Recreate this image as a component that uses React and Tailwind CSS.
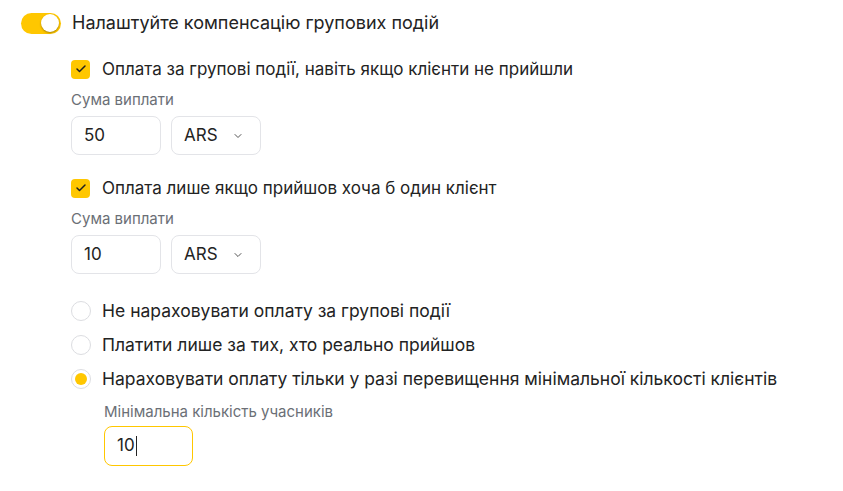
import { Check, ChevronDown } from 'lucide-react';

const font = { fontFamily: 'Inter, "Noto Sans", sans-serif' };

function Checkbox({ label }) {
  return (
    <div className="flex h-[24px] items-center gap-[12px]">
      <span className="flex h-[19px] w-[19px] items-center justify-center rounded-[4px] bg-[#ffc700]">
        <Check className="h-[12px] w-[12px] text-[#1f1f1f]" strokeWidth={3} />
      </span>
      <span className="text-[17px] leading-[24px] text-[#232323]">{label}</span>
    </div>
  );
}

function Amount({ value }) {
  return (
    <div className="mt-[9px]">
      <div className="text-[15px] leading-[20px] text-[#6b6f76]">Сума виплати</div>
      <div className="mt-[6px] flex gap-[10px]">
        <div className="flex h-[39px] w-[90px] items-center rounded-[8px] border border-[#e3e4e8] px-[12px] text-[17px] text-[#232323]">
          {value}
        </div>
        <div className="flex h-[39px] w-[90px] items-center justify-between rounded-[8px] border border-[#e3e4e8] pl-[12px] pr-[16px] text-[17px] text-[#232323]">
          ARS
          <ChevronDown className="h-[12px] w-[12px] text-[#555]" strokeWidth={2} />
        </div>
      </div>
    </div>
  );
}

function Radio({ label, checked }) {
  return (
    <div className="flex h-[24px] items-center gap-[11px]">
      <span className="flex h-[20px] w-[20px] items-center justify-center rounded-full border border-[#dcdde1] bg-white">
        {checked && <span className="h-[12px] w-[12px] rounded-full bg-[#ffc700]" />}
      </span>
      <span className="text-[17.5px] leading-[24px] text-[#232323]">{label}</span>
    </div>
  );
}

export default function App() {
  return (
    <div className="h-[491px] w-[843px] bg-white pl-[21px] pt-[12px]" style={font}>
      <div className="flex h-[22px] items-center gap-[11px]">
        <span className="flex h-[21px] w-[40px] items-center justify-end rounded-full bg-[#ffc700] pr-[2px]">
          <span className="h-[18px] w-[18px] rounded-full bg-white shadow-[0_1px_2px_rgba(0,0,0,0.35)]" />
        </span>
        <span className="text-[18px] leading-[22px] text-[#232323]">Налаштуйте компенсацію групових подій</span>
      </div>

      <div className="ml-[50px] mt-[23px] flex flex-col">
        <Checkbox label="Оплата за групові події, навіть якщо клієнти не прийшли" />
        <Amount value="50" />
        <div className="mt-[21px]">
          <Checkbox label="Оплата лише якщо прийшов хоча б один клієнт" />
        </div>
        <Amount value="10" />

        <div className="mt-[25px] flex flex-col gap-[10px]">
          <Radio label="Не нараховувати оплату за групові події" />
          <Radio label="Платити лише за тих, хто реально прийшов" />
          <Radio label="Нараховувати оплату тільки у разі перевищення мінімальної кількості клієнтів" checked />
        </div>

        <div className="ml-[33px] mt-[11px]">
          <div className="text-[15px] leading-[20px] text-[#6b6f76]">Мінімальна кількість учасників</div>
          <div className="mt-[4px] flex h-[40px] w-[89px] items-center rounded-[8px] border border-[#ffc700] px-[12px] text-[17px] text-[#232323]">
            10<span className="ml-[1px] h-[20px] w-[1px] bg-[#232323]" />
          </div>
        </div>
      </div>
    </div>
  );
}
